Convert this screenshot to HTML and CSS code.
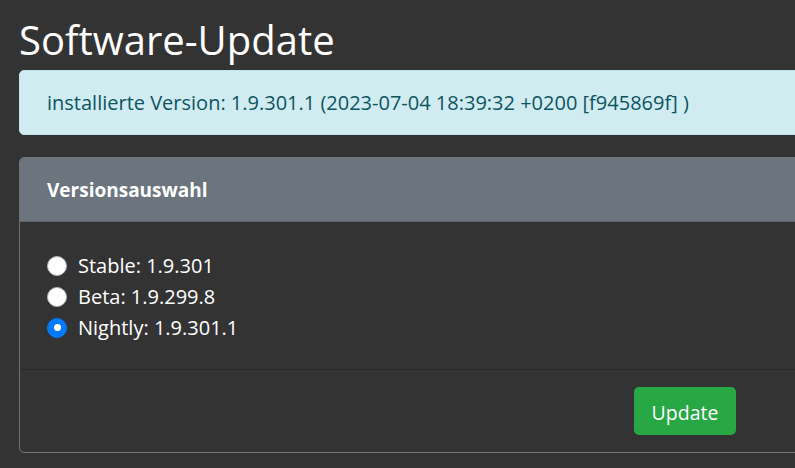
FILE: index.html
```html
<!DOCTYPE html>
<html lang="de">
<head>
<meta charset="utf-8">
<title>Software-Update</title>
<link rel="stylesheet" href="styles.css">
</head>
<body>
<div class="page">
  <h1 class="title">Software-Update</h1>
  <div class="alert">installierte Version: 1.9.301.1 (2023-07-04 18:39:32 +0200 [f945869f] )</div>
  <div class="card">
    <div class="card-header">Versionsauswahl</div>
    <div class="card-body">
      <label class="option"><input type="radio" name="v" class="radio"><span>Stable: 1.9.301</span></label>
      <label class="option"><input type="radio" name="v" class="radio"><span>Beta: 1.9.299.8</span></label>
      <label class="option"><input type="radio" name="v" class="radio" checked><span>Nightly: 1.9.301.1</span></label>
    </div>
    <div class="card-footer">
      <button class="btn">Update</button>
    </div>
  </div>
</div>
</body>
</html>
```
FILE: styles.css
```css
html, body {
  margin: 0;
  padding: 0;
  overflow: hidden;
  background: #333333;
}
body {
  font-family: "Open Sans", "Noto Sans", sans-serif;
  color: #ffffff;
  font-size: 20px;
}
.page {
  width: 1100px;
  padding: 12px 0 0 19px;
}
.title {
  margin: 0;
  font-size: 40px;
  font-weight: 400;
  line-height: 56px;
  height: 58px;
}
.alert {
  height: 63px;
  display: flex;
  align-items: center;
  padding: 0 27px;
  background: #d1ecf1;
  color: #0c5460;
  border: 1px solid #bee5eb;
  border-radius: 5px;
  font-size: 20px;
}
.card {
  margin-top: 22px;
  border: 1px solid #6c757d;
  border-radius: 5px;
  overflow: hidden;
}
.card-header {
  height: 63px;
  display: flex;
  align-items: center;
  padding: 0 27px;
  background: #6c757d;
  font-weight: 700;
  font-size: 19px;
  border-bottom: 1px solid rgba(0,0,0,.125);
}
.card-body {
  padding: 28px 27px 26px;
  display: flex;
  flex-direction: column;
}
.option {
  display: flex;
  align-items: center;
  height: 31px;
  gap: 11px;
}
.radio {
  appearance: none;
  -webkit-appearance: none;
  margin: 0;
  width: 20px;
  height: 20px;
  border-radius: 50%;
  background: #ffffff;
  border: 1px solid #adb5bd;
  position: relative;
}
.radio:checked {
  background: #007bff;
  border-color: #007bff;
}
.radio:checked::after {
  content: "";
  position: absolute;
  left: 50%;
  top: 50%;
  width: 7px;
  height: 7px;
  margin: -3.5px 0 0 -3.5px;
  border-radius: 50%;
  background: #ffffff;
}
.card-footer {
  border-top: 1px solid rgba(0,0,0,.2);
  padding: 17px 0 16px 614px;
  height: 49px;
}
.btn {
  width: 102px;
  height: 48px;
  border: none;
  border-radius: 5px;
  background: #28a745;
  color: #ffffff;
  font-family: inherit;
  font-size: 19.5px;
  padding: 2px 0 0;
}
```
